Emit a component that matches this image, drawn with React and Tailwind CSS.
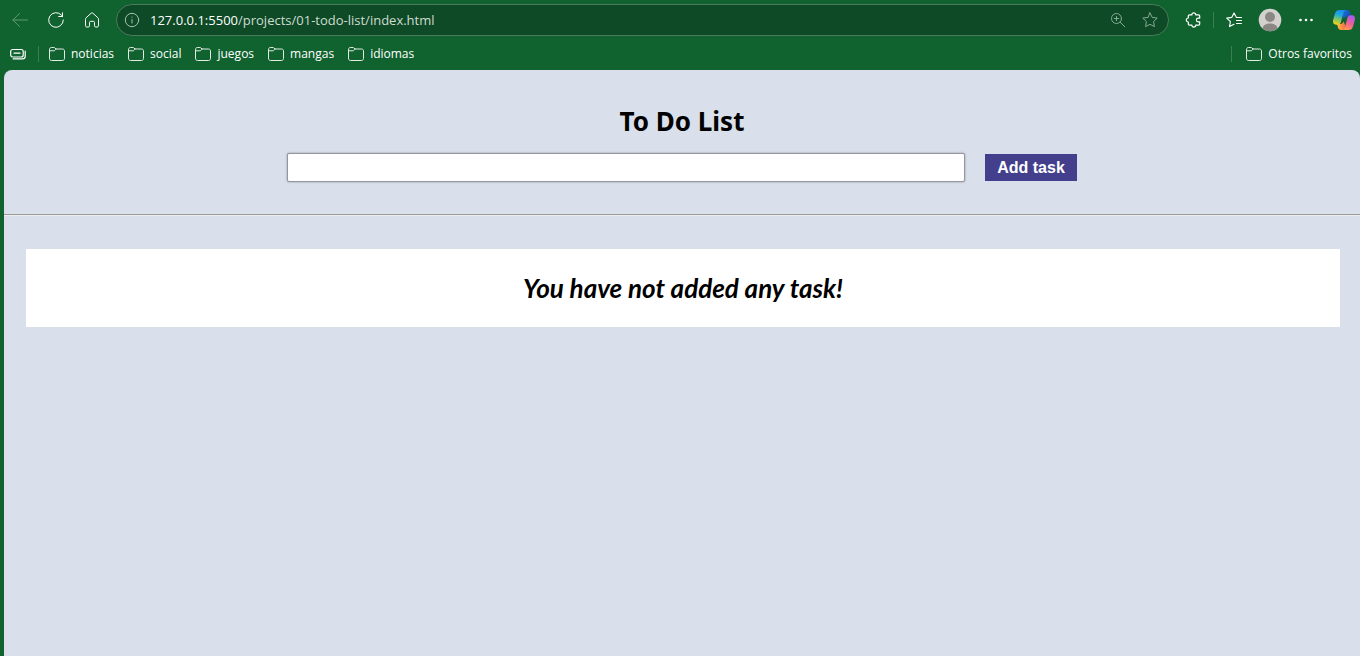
import { useState } from "react";

function Icon({ children, className = "", size = 16, stroke = 1 }) {
  return (
    <svg
      width={size}
      height={size}
      viewBox="0 0 16 16"
      fill="none"
      stroke="currentColor"
      strokeWidth={stroke}
      strokeLinecap="round"
      strokeLinejoin="round"
      className={"shrink-0 " + className}
      aria-hidden="true"
    >
      {children}
    </svg>
  );
}

function ToolButton({ label, className = "", children }) {
  return (
    <button type="button" aria-label={label} className={"flex h-8 w-9 shrink-0 items-center justify-center " + className}>
      {children}
    </button>
  );
}

function Folder({ name }) {
  return (
    <a href="#" className="flex items-center gap-1.5 whitespace-nowrap">
      <Icon className="text-[#e4ece6]">
        <path d="M.5 3.5C.5 2.400 1.200 1.500 2.300 1.500h2.600c.5 0 .8.2 1.100.5l1 1h6.500c1.200 0 2 .8 2 2v7.500c0 1.200-.8 2-2 2h-11c-1.200 0-2-.8-2-2z" />
        <path d="M.7 4.800h4.200c.5 0 .8-.2 1.100-.5L7.200 3" />
      </Icon>
      {name}
    </a>
  );
}

function Copilot() {
  return (
    <svg width="24" height="22" viewBox="0 0 24 22" aria-hidden="true">
      <defs>
        <linearGradient id="cpLeft" x1="0.6" y1="0" x2="0.4" y2="1">
          <stop offset="0" stopColor="#1a8df0" />
          <stop offset="0.35" stopColor="#22a9dc" />
          <stop offset="0.65" stopColor="#7cc46b" />
          <stop offset="1" stopColor="#f2d21b" />
        </linearGradient>
        <linearGradient id="cpRight" x1="0.7" y1="0" x2="0.3" y2="1">
          <stop offset="0" stopColor="#a45bf0" />
          <stop offset="0.5" stopColor="#ee5d9c" />
          <stop offset="1" stopColor="#ff9a4d" />
        </linearGradient>
        <linearGradient id="cpTop" x1="0" y1="0" x2="1" y2="0.6">
          <stop offset="0" stopColor="#1c7fe0" />
          <stop offset="1" stopColor="#1747b5" />
        </linearGradient>
        <linearGradient id="cpBottom" x1="0" y1="0" x2="1" y2="0">
          <stop offset="0" stopColor="#ffc04a" />
          <stop offset="1" stopColor="#f0503c" />
        </linearGradient>
      </defs>
      <path d="M8 1h7c1.700 0 2.600 1 3 2.500L19 7.500h-4c-1.800 0-2.700 1-3.200 2.800L10 4z" fill="url(#cpTop)" />
      <path d="M16 21H9c-1.700 0-2.600-1-3-2.500L5 15h3.500c1.600 0 2.500-1 3-2.700L14 18z" fill="url(#cpBottom)" />
      <path d="M7.500 1H14c-1.600.5-2.200 1.700-2.700 3.400L9 12.700c-.5 1.800-1.600 3-3.400 3H4.200C1.500 15.700.5 13.500 1.200 10.800L3 4.500C3.700 2 5.100 1 7.500 1z" fill="url(#cpLeft)" />
      <path d="M16.500 21H10.500c1.600-.5 2.200-1.700 2.700-3.400L15.300 9.300c.5-1.800 1.600-3 3.400-3h1.100c2.700 0 3.700 2.200 3 4.900L21 17.500c-.7 2.500-2.100 3.500-4.500 3.500z" fill="url(#cpRight)" />
    </svg>
  );
}

function BrowserBar() {
  return (
    <header className="text-white">
      <div className="flex h-10 items-center pl-0.5">
        <ToolButton label="Back" className="text-[#5f9b74]">
          <Icon><path d="M15.500 8H.8M7.500 1.500L.8 8l6.700 6.500" /></Icon>
        </ToolButton>
        <ToolButton label="Reload">
          <Icon><path d="M15.300 8A7.300 7.300 0 1 1 13.500 3.200L14.500 4.500M14.500.8v3.700h-3.800" /></Icon>
        </ToolButton>
        <ToolButton label="Home">
          <Icon><path d="M1.500 7.200c0-.6.2-1 .6-1.400L7 1.300c.6-.5 1.400-.5 2 0l4.900 4.500c.4.4.6.8.6 1.400v6.600c0 .7-.5 1.200-1.200 1.200h-1.600c-.7 0-1.200-.5-1.200-1.200V10.500c0-.7-.5-1.200-1.200-1.200H6.700c-.7 0-1.200.5-1.200 1.200v3.300c0 .7-.5 1.200-1.200 1.200H2.700c-.7 0-1.200-.5-1.200-1.200z" /></Icon>
        </ToolButton>

        <div className="mx-1.5 flex h-8 min-w-0 flex-1 items-center gap-2.5 rounded-full border border-[#4b7b5b] bg-[#0d4a25] pl-[7px] pr-2.5">
          <Icon className="text-[#a9c2b1]">
            <circle cx="8" cy="8" r="6.700" />
            <path d="M8 7.500v3.500M8 5v.2" />
          </Icon>
          <a href="#" className="min-w-0 flex-1 truncate font-['Open_Sans','Noto_Sans',sans-serif] text-[13px] leading-5 text-[#cfdcd3]">
            <span className="text-white">127.0.0.1:5500</span>/projects/01-todo-list/index.html
          </a>
          <button type="button" aria-label="Zoom" className="mr-1.5 text-[#86ab93]">
            <Icon><circle cx="6.500" cy="6.500" r="5" /><path d="M10.200 10.200l4.600 4.600M6.500 4.300v4.400M4.300 6.500h4.400" /></Icon>
          </button>
          <button type="button" aria-label="Add to favorites" className="text-[#86ab93]">
            <Icon><path d="M8 .9l2.200 4.500 5 .7-3.600 3.500.8 5L8 12.300l-4.400 2.300.8-5L.8 6.100l5-.7z" /></Icon>
          </button>
        </div>

        <ToolButton label="Extensions">
          <Icon stroke={1.2}>
            <path d="M4.500 2.900h2.300a2 2 0 0 1 4 0h2.700c.7 0 1.200.5 1.200 1.200v2.100h-1.500a1.800 1.800 0 0 0 0 3.600h1.500v2.100c0 .7-.5 1.200-1.200 1.200h-2.700a2 2 0 0 1-4 0H4.500c-.7 0-1.200-.5-1.200-1.200V10a2 2 0 0 1 0-4V4.100c0-.7.5-1.200 1.200-1.200z" />
          </Icon>
        </ToolButton>
        <div className="mx-0.5 h-4 w-px bg-[#3b7d54]" />
        <ToolButton label="Favorites">
          <Icon stroke={1.1}>
            <path d="M15.500 5.500h-5L8 .9 5.700 5.400l-5 .7 3.700 3.500-.9 5L8 12.300M10.500 8.500h5M10.500 11.500h5" />
          </Icon>
        </ToolButton>
        <ToolButton label="Profile">
          <svg width="24" height="24" viewBox="0 0 24 24" aria-hidden="true">
            <circle cx="12" cy="12" r="11.300" fill="#d3d1ce" />
            <circle cx="12" cy="9" r="5" fill="#8b8784" />
            <path d="M4.500 20.400C5.200 17 8 15.500 12 15.500s6.800 1.500 7.500 4.900A11.300 11.300 0 0 1 12 23.300a11.300 11.300 0 0 1-7.500-2.900z" fill="#8b8784" />
          </svg>
        </ToolButton>
        <ToolButton label="More">
          <svg width="16" height="16" viewBox="0 0 16 16" fill="currentColor" aria-hidden="true">
            <circle cx="2.500" cy="8" r="1.300" /><circle cx="8" cy="8" r="1.300" /><circle cx="13.500" cy="8" r="1.300" />
          </svg>
        </ToolButton>
        <ToolButton label="Copilot" className="pl-1"><Copilot /></ToolButton>
      </div>

      <nav className="flex h-[30px] items-center gap-3.5 pb-0.5 pl-2.5 pr-2 font-['Open_Sans','Noto_Sans',sans-serif] text-[12px] leading-4">
        <div className="flex items-center gap-2.5">
          <button type="button" aria-label="Tab groups">
            <Icon stroke={1.2}>
              <rect x=".7" y="3.500" width="12.500" height="7.500" rx="2" />
              <path d="M4 7.200h6M15.200 5v5.200c0 1.700-1 2.700-2.600 2.700H3.200" />
            </Icon>
          </button>
          <div className="ml-0.5 h-4 w-px bg-[#3b7d54]" />
          <Folder name="noticias" />
        </div>
        <Folder name="social" />
        <Folder name="juegos" />
        <Folder name="mangas" />
        <Folder name="idiomas" />
        <div className="ml-auto h-4 w-px bg-[#3b7d54]" />
        <Folder name="Otros favoritos" />
      </nav>
    </header>
  );
}

export default function App() {
  const [task, setTask] = useState("");
  return (
    <div className="flex min-h-screen flex-col bg-[#10622f]">
      <BrowserBar />
      <main className="ml-1 flex-1 rounded-t-lg bg-[#d9dfeb] pt-[31px]">
        <h1 className="text-center font-['Noto_Sans',sans-serif] text-[26px] font-bold leading-10 text-black">To Do List</h1>
        <form className="mt-3 flex items-center justify-center gap-5" onSubmit={(e) => e.preventDefault()}>
          <input
            type="text"
            aria-label="Task"
            value={task}
            onChange={(e) => setTask(e.target.value)}
            className="h-[29px] w-1/2 rounded-xs border border-[#95979f] bg-white px-2 text-base shadow-[0_0_2px_#888] outline-none"
          />
          <button type="submit" className="h-[27px] bg-[#433f8d] px-3 font-['Liberation_Sans',Arial,sans-serif] text-[16px] font-bold leading-6 text-white">
            Add task
          </button>
        </form>
        <hr className="mt-8 border-b border-t border-b-[#eeeeee] border-t-[#9a9a9a]" />
        <section className="ml-[22px] mr-5 mt-[33px] bg-white py-5">
          <p className="text-center font-['Lato',sans-serif] text-[26px] font-bold italic leading-[38px] text-black">You have not added any task!</p>
        </section>
      </main>
    </div>
  );
}
